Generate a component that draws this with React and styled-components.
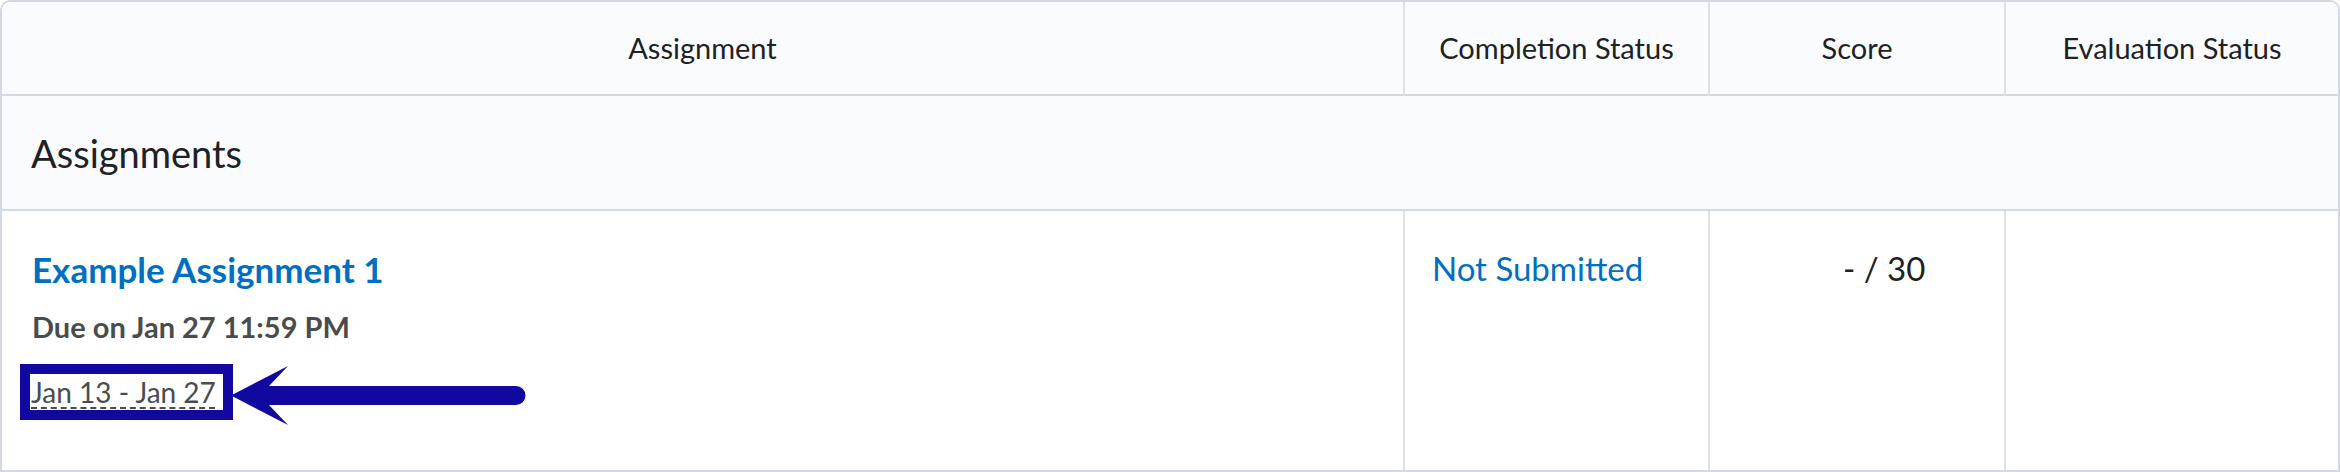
import styled, { createGlobalStyle } from "styled-components"

const Global = createGlobalStyle`
html, body {
  margin: 0;
  padding: 0;
  background: #ffffff;
}
body {
  font-family: Lato, "Noto Sans", sans-serif;
  color: #202122;
}
`

const Page = styled.div`
position: relative;
width: 2340px;
height: 472px;
`

const Table = styled.div`
box-sizing: border-box;
width: 2340px;
height: 472px;
border: 2px solid #d3d9e2;
border-radius: 10px 10px 0 0;
overflow: hidden;
display: grid;
grid-template-columns: 1401px 305px 296px 1fr;
grid-template-rows: 94px 115px 1fr;
`

const HeadCell = styled.div`
display: flex;
align-items: center;
justify-content: center;
background: #f9fbff;
border-bottom: 2px solid #d3d9e2;
border-left: ${p => (p.$first ? "none" : "2px solid #dde2e9")};
font-size: 29px;
color: #202122;
padding-bottom: 2px;
`

const GroupRow = styled.div`
grid-column: 1 / -1;
display: flex;
align-items: center;
padding-left: 29px;
background: #f9fbff;
border-bottom: 2px solid #d3d9e2;
font-size: 38px;
color: #202122;
`

const Cell = styled.div`
position: relative;
border-left: ${p => (p.$first ? "none" : "2px solid #dde2e9")};
padding: ${p => p.$pad || "0"};
display: flex;
flex-direction: column;
align-items: flex-start;
`

const Title = styled.a`
font-size: 35px;
font-weight: 700;
color: #006fbf;
text-decoration: none;
line-height: 42px;
`

const Due = styled.div`
margin-top: 19px;
font-size: 29px;
font-weight: 700;
color: #494c4e;
line-height: 36px;
`

const DateChip = styled.span`
margin-top: 19px;
margin-left: -12px;
border: 10px solid #10089f;
padding: 0 7px 0 1px;
font-size: 28px;
line-height: 36px;
color: #494c4e;
`

const Dashed = styled.span`
text-decoration: underline dashed #494c4e;
text-decoration-thickness: 2px;
text-underline-offset: 4px;
`

const Status = styled.a`
font-size: 33px;
color: #006fbf;
text-decoration: none;
line-height: 40px;
`

const Score = styled.div`
font-size: 33px;
color: #202122;
line-height: 40px;
`

const Arrow = styled.svg`
position: absolute;
left: 225px;
top: 360px;
`

export default function App(){
    return (
        <Page>
            <Global />
            <Table>
                <HeadCell $first>Assignment</HeadCell>
                <HeadCell>Completion Status</HeadCell>
                <HeadCell>Score</HeadCell>
                <HeadCell>Evaluation Status</HeadCell>

                <GroupRow>Assignments</GroupRow>

                <Cell $first $pad="37px 0 0 30px">
                    <Title href="#">Example Assignment 1</Title>
                    <Due>Due on Jan 27 11:59 PM</Due>
                    <DateChip><Dashed>Jan 13 - Jan 27</Dashed></DateChip>
                </Cell>
                <Cell $pad="37px 0 0 27px">
                    <Status href="#">Not Submitted</Status>
                </Cell>
                <Cell $pad="37px 0 0 133px">
                    <Score>- / 30</Score>
                </Cell>
                <Cell />
            </Table>
            <Arrow width="310" height="70" viewBox="225 360 310 70">
                <path
                    d="M231 395.5 L288 366 L269 386 L516 386 A9.5 9.5 0 0 1 516 405 L269 405 L288 425 Z"
                    fill="#10089f"
                />
            </Arrow>
        </Page>
    )
}
